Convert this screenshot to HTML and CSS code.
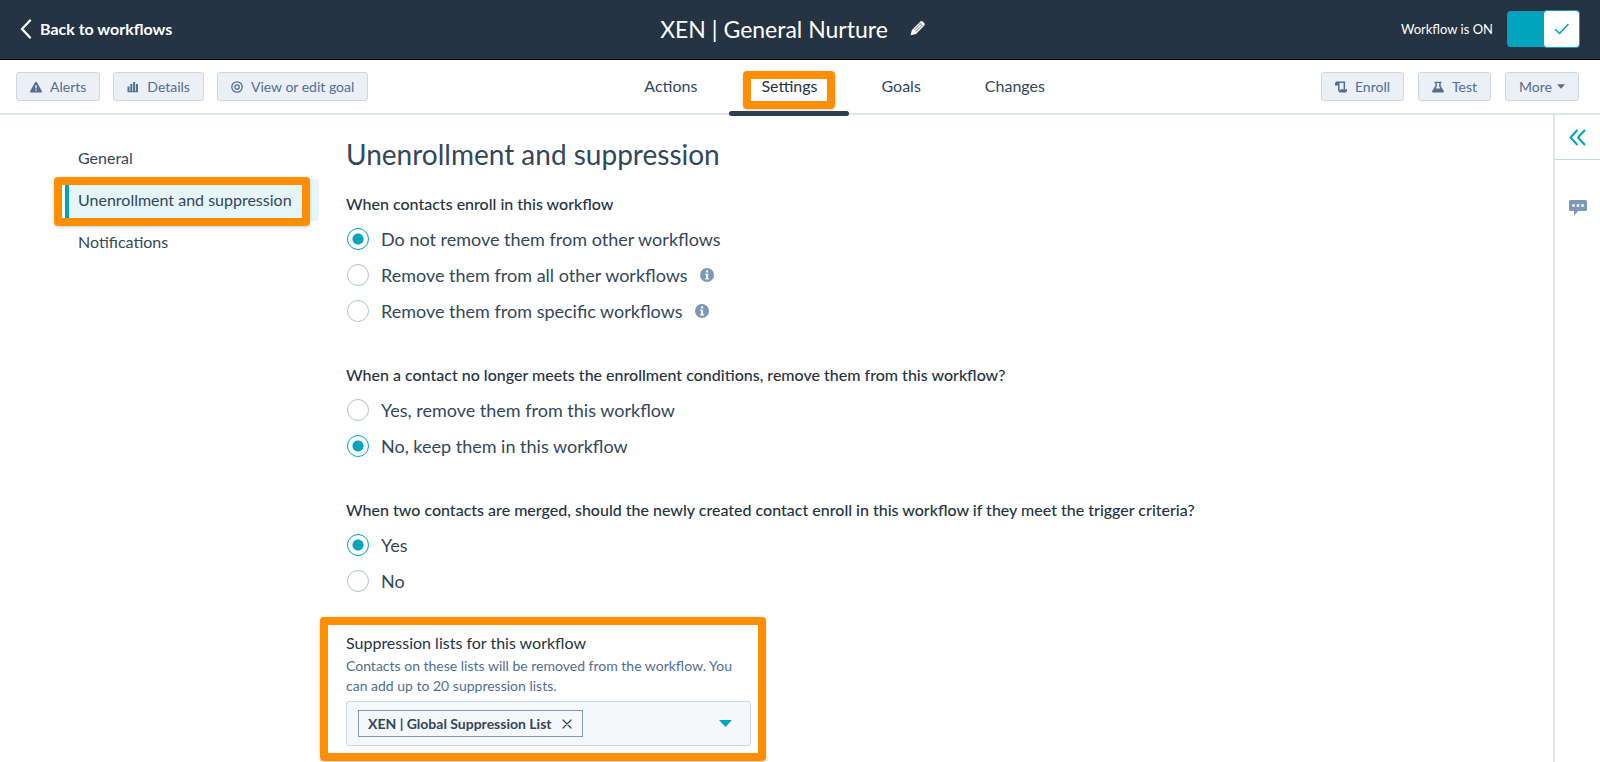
FILE: index.html
```html
<!DOCTYPE html>
<html lang="en">
<head>
    <meta charset="UTF-8">
    <meta name="viewport" content="width=device-width, initial-scale=1.0">
    <title>XEN | General Nurture</title>
    <link rel="stylesheet" href="styles.css">
</head>
<body>
    <header class="topbar">
        <a class="back-link" href="#">
            <svg width="12" height="20" viewBox="0 0 12 20" fill="none" stroke="currentColor" stroke-width="2.4" stroke-linecap="round" stroke-linejoin="round"><path d="M10 1.5 2 10l8 8.5"/></svg>
            Back to workflows
        </a>
        <div class="title-group">
            <h1>XEN | General Nurture</h1>
            <button class="edit-button" aria-label="Edit name">
                <svg width="16" height="16" viewBox="0 0 16 16"><path fill="#fff" d="M.6 15.300 1.900 9.900 10.200 1.700a2 2 0 0 1 2.800 0l1.200 1.200a2 2 0 0 1 0 2.800L6 14z"/><path stroke="#253342" stroke-width=".7" d="M9.500 2.900l3.600 3.600M4.200 10.200l6-6M5.700 11.700l6-6"/></svg>
            </button>
        </div>
        <label class="power">
            <span>Workflow is ON</span>
            <input type="checkbox" class="switch-input" checked>
            <span class="switch">
                <span class="knob">
                    <svg width="16" height="12" viewBox="0 0 16 12" fill="none" stroke="#00a4bd" stroke-width="1.600" stroke-linecap="round" stroke-linejoin="round"><path d="M1.500 6.500 5.500 10.500 14 1.500"/></svg>
                </span>
            </span>
        </label>
    </header>

    <div class="toolbar">
        <div class="button-group">
            <button class="button">
                <svg width="12" height="12" viewBox="0 0 12 12"><path fill="currentColor" d="M6 .8c.5 0 .8.300 1 .7l4.800 8.500c.4.800 0 1.500-.8 1.500H1c-.8 0-1.200-.7-.8-1.500L5 1.500c.2-.4.500-.7 1-.7z"/><path stroke="#eaf0f6" stroke-width="1.300" d="M6 4v3.600M6 8.600V10"/></svg>
                Alerts
            </button>
            <button class="button">
                <svg width="12" height="12" viewBox="0 0 12 12" fill="currentColor"><path d="M.5 5.500h2v5h-2zM3.300 3h2v7.500h-2zM6.100 1h2v9.500h-2zM8.900 3h2v7.500h-2zM.5 10.300h10.400v1H.5z"/></svg>
                Details
            </button>
            <button class="button">
                <svg width="12" height="12" viewBox="0 0 12 12" fill="none" stroke="currentColor" stroke-width="1.300"><circle cx="6" cy="6" r="5.200"/><circle cx="6" cy="6" r="2.200"/></svg>
                View or edit goal
            </button>
        </div>
        <nav class="tabs">
            <a class="tab" href="#">Actions</a>
            <a class="tab tab-active" href="#">Settings<span class="callout"></span></a>
            <a class="tab" href="#">Goals</a>
            <a class="tab" href="#">Changes</a>
        </nav>
        <div class="button-group button-group-right">
            <button class="button">
                <svg width="12" height="12" viewBox="0 0 12 12"><path fill="none" stroke="currentColor" stroke-width="1.500" d="M2 1.300h7.300v7M3.800 1.300v8.500"/><path fill="currentColor" d="M0 2.500A1.900 1.900 0 0 1 3.800 2.500V4.500H0zM5.300 8.200H12v1.300a1.900 1.900 0 0 1-1.900 1.900H4.900A1.800 1.800 0 0 1 3.100 9.600H5.300z"/></svg>
                Enroll
            </button>
            <button class="button">
                <svg width="12" height="12" viewBox="0 0 12 12"><path fill="currentColor" d="M2.500.7h7v1.300H8.700v3L11.800 10c.4.800 0 1.400-.7 1.400H.9c-.7 0-1.100-.6-.7-1.400L3.300 5V2h-.8z"/><path fill="#eaf0f6" d="M4.800 2h2.400v3.500l1.100 1.900H3.700l1.100-1.900z"/></svg>
                Test
            </button>
            <button class="button button-more">
                More
                <svg width="8" height="5" viewBox="0 0 8 5"><path fill="currentColor" d="M0 .3h8L4 4.700z"/></svg>
            </button>
        </div>
    </div>

    <div class="page">
        <nav class="side-nav">
            <a class="side-link" href="#">General</a>
            <a class="side-link side-link-active" href="#">Unenrollment and suppression<span class="callout"></span></a>
            <a class="side-link" href="#">Notifications</a>
        </nav>

        <main class="content">
            <h2>Unenrollment and suppression</h2>

            <fieldset class="question">
                <legend>When contacts enroll in this workflow</legend>
                <label class="option"><input type="radio" name="enroll" checked>Do not remove them from other workflows</label>
                <label class="option"><input type="radio" name="enroll">Remove them from all other workflows
                    <svg class="info" width="14" height="14" viewBox="0 0 14 14"><circle cx="7" cy="7" r="7" fill="#7c98b6"/><path fill="#fff" d="M6 2.500h2.200v2H6zM5.200 5.700h3v4.500h.8v1.300H5.200v-1.300H6V7h-.8z"/></svg>
                </label>
                <label class="option"><input type="radio" name="enroll">Remove them from specific workflows
                    <svg class="info" width="14" height="14" viewBox="0 0 14 14"><circle cx="7" cy="7" r="7" fill="#7c98b6"/><path fill="#fff" d="M6 2.500h2.200v2H6zM5.200 5.700h3v4.500h.8v1.300H5.200v-1.300H6V7h-.8z"/></svg>
                </label>
            </fieldset>

            <fieldset class="question">
                <legend>When a contact no longer meets the enrollment conditions, remove them from this workflow?</legend>
                <label class="option"><input type="radio" name="conditions">Yes, remove them from this workflow</label>
                <label class="option"><input type="radio" name="conditions" checked>No, keep them in this workflow</label>
            </fieldset>

            <fieldset class="question">
                <legend>When two contacts are merged, should the newly created contact enroll in this workflow if they meet the trigger criteria?</legend>
                <label class="option"><input type="radio" name="merged" checked>Yes</label>
                <label class="option"><input type="radio" name="merged">No</label>
            </fieldset>

            <div class="suppression">
                <label class="suppression-title" for="lists">Suppression lists for this workflow</label>
                <p>Contacts on these lists will be removed from the workflow. You can add up to 20 suppression lists.</p>
                <div class="select-box">
                    <span class="tag">
                        XEN | Global Suppression List
                        <button class="tag-remove" aria-label="Remove list">
                            <svg width="10" height="10" viewBox="0 0 10 10" stroke="#33475b" stroke-width="1.200" stroke-linecap="round"><path d="M1 1l8 8M9 1 1 9"/></svg>
                        </button>
                    </span>
                    <select id="lists"><option value=""></option></select>
                    <svg class="caret" width="13" height="7" viewBox="0 0 13 7"><path fill="#00a4bd" d="M0 0h13L6.500 7z"/></svg>
                </div>
                <span class="callout"></span>
            </div>
        </main>

        <aside class="rail">
            <button class="rail-button rail-toggle" aria-label="Expand panel">
                <svg width="17" height="17" viewBox="0 0 17 17" fill="none" stroke="#00a4bd" stroke-width="2" stroke-linecap="round" stroke-linejoin="round"><path d="M8 1.500l-6.500 7L8 15.500M15.500 1.500 9 8.500l6.500 7"/></svg>
            </button>
            <button class="rail-button rail-comments" aria-label="Comments">
                <svg width="18" height="16" viewBox="0 0 18 16"><path fill="#7c98b6" d="M1.500 0h15A1.500 1.500 0 0 1 18 1.500v8a1.500 1.500 0 0 1-1.500 1.500H9l-4 4.800V11H1.500A1.500 1.500 0 0 1 0 9.500v-8A1.500 1.500 0 0 1 1.500 0z"/><path fill="#fff" d="M3.200 4.200h2.600v2.600H3.200zM7.700 4.200h2.600v2.600H7.700zM12.200 4.200h2.600v2.600h-2.600z"/></svg>
            </button>
        </aside>
    </div>
</body>
</html>
```
FILE: styles.css
```css
* {
    box-sizing: border-box;
}

body {
    margin: 0;
    min-height: 100vh;
    display: flex;
    flex-direction: column;
    font-family: Lato, "Open Sans", sans-serif;
    font-size: 16px;
    color: #33475b;
    background: #fff;
}

a {
    color: inherit;
    text-decoration: none;
}

button {
    font: inherit;
    border: none;
    background: none;
    padding: 0;
    cursor: pointer;
}

svg {
    display: block;
    flex: none;
}

/* Top bar */
.topbar {
    display: grid;
    grid-template-columns: 1fr auto 1fr;
    align-items: center;
    height: 60px;
    padding: 0 20px 2px;
    background: #253342;
    border-bottom: 1px solid #000;
    color: #fff;
}

.back-link {
    display: flex;
    align-items: center;
    gap: 8px;
    font-weight: 700;
}

.title-group {
    display: flex;
    align-items: center;
}

h1 {
    margin: 0;
    font-size: 23px;
    font-weight: 400;
}

.edit-button {
    padding: 0 14px 2px 22px;
}

.power {
    display: flex;
    align-items: center;
    justify-content: flex-end;
    gap: 14px;
    font-size: 13px;
    cursor: pointer;
}

.switch-input {
    position: absolute;
    opacity: 0;
}

.switch {
    display: flex;
    align-items: center;
    width: 73px;
    height: 36px;
    border-radius: 4px;
    background: #cbd6e2;
}

.switch-input:checked + .switch {
    justify-content: flex-end;
    background: #00a4bd;
}

.knob {
    display: flex;
    flex: none;
    align-items: center;
    justify-content: center;
    width: 37px;
    height: 38px;
    border: 1px solid #00a4bd;
    border-radius: 4px;
    background: #fff;
}

/* Toolbar */
.toolbar {
    display: flex;
    align-items: center;
    justify-content: space-between;
    height: 55px;
    padding: 0 21px 0 16px;
    border-bottom: 2px solid #dfe6ee;
}

.button-group {
    display: flex;
    gap: 13px;
}

.button-group-right {
    gap: 14px;
}

.button {
    display: flex;
    align-items: center;
    gap: 8px;
    height: 29px;
    padding: 0 13px;
    border: 1px solid #cbd6e2;
    border-radius: 3px;
    background: #eaf0f6;
    color: #506e91;
    font-size: 14px;
}

.button-more {
    gap: 5px;
}

.tabs {
    display: flex;
    align-self: stretch;
}

.tab {
    position: relative;
    padding: 0 32px;
    line-height: 51px;
}

.tab-active {
    color: #253342;
}

.tab-active::after {
    content: "";
    position: absolute;
    left: 0;
    right: 0;
    bottom: -3px;
    height: 5px;
    border-radius: 3px;
    background: #2d3e50;
}

/* Orange frames drawn over the highlighted parts */
.callout {
    position: absolute;
    border: 8px solid #ff8f00;
    border-radius: 4px;
    box-shadow: 0 1px 3px rgba(0, 0, 0, 0.2);
    pointer-events: none;
}

.tab .callout {
    inset: 11px 14px 4px;
}

.side-link .callout {
    inset: -2px 9px -5px -15px;
}

.suppression .callout {
    inset: -16px -15px -15px -26px;
}

/* Page */
.page {
    flex: 1;
    display: flex;
}

.side-nav {
    width: 254px;
    margin: 22px 27px 0 65px;
}

.side-link {
    position: relative;
    display: block;
    padding-left: 13px;
    line-height: 42px;
    white-space: nowrap;
}

.side-link-active {
    border-left: 4px solid #00a4bd;
    border-radius: 0 3px 3px 0;
    padding-left: 9px;
    background: #e5f5f8;
}

.content {
    flex: 1;
    min-width: 0;
    padding: 21px 24px 16px 0;
}

h2 {
    margin: 0 0 20px;
    font-size: 28px;
    font-weight: 400;
    line-height: 36px;
}

.question {
    margin: 0 0 34px;
    padding: 0;
    border: none;
}

legend {
    padding: 0;
    margin-bottom: 5px;
    font-weight: 500;
    line-height: 24px;
    color: #253342;
}

.option {
    display: flex;
    align-items: center;
    height: 36px;
    padding-left: 1px;
    font-size: 18px;
}

.option input {
    appearance: none;
    width: 22px;
    height: 22px;
    margin: 0 12px 0 0;
    border: 1px solid #b4c3d3;
    border-radius: 50%;
}

.option input:checked {
    border-color: #00a4bd;
    background: radial-gradient(circle, #00a4bd 5px, #fff 6px);
}

.info {
    margin-left: 12px;
}

.suppression {
    position: relative;
    width: 405px;
}

.suppression-title {
    display: block;
    line-height: 20px;
    color: #253342;
}

.suppression p {
    margin: 3px 0 5px;
    font-size: 14px;
    line-height: 20px;
    color: #506e91;
}

.select-box {
    position: relative;
    display: flex;
    align-items: center;
    height: 45px;
    padding: 0 11px;
    border: 1px solid #cbd6e2;
    border-radius: 3px;
    background: #f5f8fa;
}

.select-box select {
    flex: 1;
    min-width: 0;
    height: 100%;
    appearance: none;
    border: none;
    background: none;
}

.tag {
    display: flex;
    align-items: center;
    gap: 10px;
    height: 27px;
    padding: 0 10px 0 9px;
    border: 1px solid #7c98b6;
    font-size: 14px;
    font-weight: 700;
}

.caret {
    position: absolute;
    right: 18px;
    pointer-events: none;
}

/* Right rail */
.rail {
    width: 47px;
    border-left: 2px solid #dfe6ee;
}

.rail-button {
    display: flex;
    align-items: center;
    justify-content: center;
    width: 100%;
    height: 45px;
}

.rail-toggle {
    border-bottom: 1px solid #cbd6e2;
}

.rail-comments {
    margin-top: 25px;
}
```
